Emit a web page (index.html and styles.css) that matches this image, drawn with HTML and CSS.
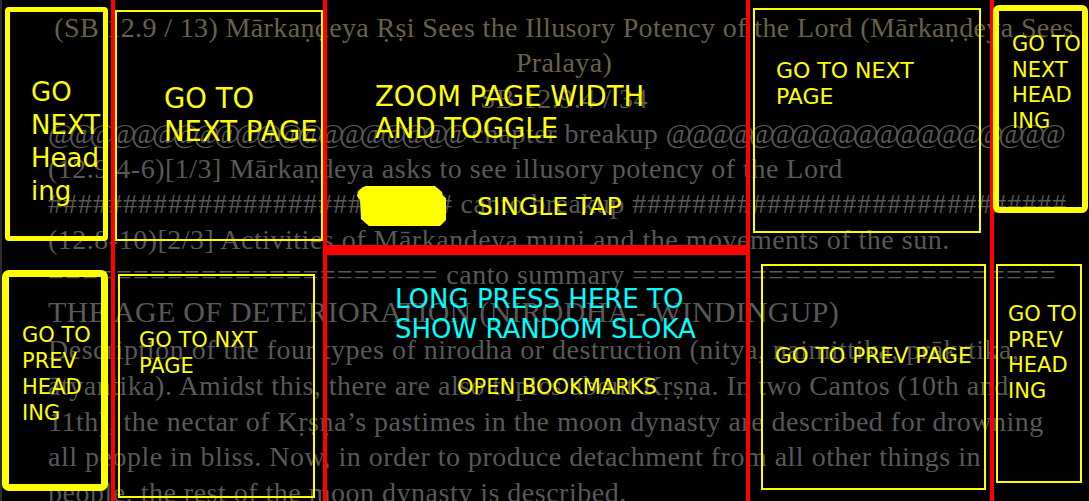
FILE: index.html
```html
<!DOCTYPE html>
<html lang="en">
<head>
<meta charset="utf-8">
<title>Reader tap zones</title>
<link rel="stylesheet" href="styles.css">
</head>
<body>
<main class="reader">
  <div class="title">(SB 12.9 / 13) Mārkaṇḍeya Ṛṣi Sees the Illusory Potency of the Lord (Mārkaṇḍeya Sees</div>
  <div class="title">Pralaya)</div>
  <div class="ref">SB 12.9.4 / 34</div>
  <div class="line"><span class="at">@@@@@@@@@@@@@@@@@@@@</span> chapter breakup <span class="at">@@@@@@@@@@@@@@@@@@@</span></div>
  <div class="line">(12.9.4-6)[1/3] Mārkaṇḍeya asks to see illusory potency of the Lord</div>
  <div class="line"><span class="hash">###########################</span>  canto breakup  <span class="hash">#############################</span></div>
  <div class="line">(12.8-10)[2/3] Activities of Mārkaṇḍeya muni and the movements of the sun.</div>
  <div class="line"><span class="eq">=======================</span>  canto summary  <span class="eq">=========================</span></div>
  <h2 class="chapter">THE AGE OF DETERIORATION (NIRODHA - WINDINGUP)</h2>
  <p class="summary">Description of the four types of nirodha or destruction (nitya, naimittika, prākṛtika,<br>ātyantika). Amidst this, there are also topics about Kṛṣṇa. In two Cantos (10th and<br>11th), the nectar of Kṛṣṇa’s pastimes in the moon dynasty are described for drowning<br>all people in bliss. Now, in order to produce detachment from all other things in<br>people, the rest of the moon dynasty is described.</p>
</main>

<div class="zones">
  <div class="col col-1">
    <div class="zone thick z-a">GO<br>NEXT<br>Head<br>ing</div>
    <div class="zone thick z-b">GO TO<br>PREV<br>HEAD<br>ING</div>
  </div>
  <div class="col col-2">
    <div class="zone thin z-c">GO TO<br>NEXT PAGE</div>
    <div class="zone thin z-d">GO TO NXT<br>PAGE</div>
  </div>
  <div class="col col-3">
    <div class="half half-top">
      <div class="zoom-label">ZOOM PAGE WIDTH<br>AND TOGGLE</div>
      <div class="tap-row">
        <svg class="blob" width="90" height="41" viewBox="0 0 90 41" aria-hidden="true">
          <polygon points="9,0 78,0 85,6 86,10 89,12 89,34 83,40 12,40 4,33 3,14 0,10 1,5 6,1" fill="#ffff00"/>
        </svg>
        <span class="tap-label">SINGLE TAP</span>
      </div>
    </div>
    <div class="half half-bottom">
      <div class="long-press">LONG PRESS HERE TO<br>SHOW RANDOM SLOKA</div>
      <div class="bookmarks">OPEN BOOKMARKS</div>
    </div>
  </div>
  <div class="col col-4">
    <div class="zone thin z-e">GO TO NEXT<br>PAGE</div>
    <div class="zone thin z-f">GO TO PREV PAGE</div>
  </div>
  <div class="col col-5">
    <div class="zone thick z-g">GO TO<br>NEXT<br>HEAD<br>ING</div>
    <div class="zone thin z-h">GO TO<br>PREV<br>HEAD<br>ING</div>
  </div>
</div>
</body>
</html>
```

FILE: styles.css
```css
html, body {
  margin: 0;
  padding: 0;
  background: #000;
}

body {
  width: 1089px;
  height: 501px;
  overflow: hidden;
  position: relative;
  font-family: "Liberation Serif", "DejaVu Serif", serif;
}

/* ---------- underlying page text ---------- */
.reader {
  padding: 10px 9px 0 48px;
  color: #585858;
  font-size: 28px;
  letter-spacing: 0.5px;
  line-height: 35.3px;
  white-space: nowrap;
}

.title {
  text-align: center;
  color: #68614a;
  letter-spacing: 0.37px;
}

.ref {
  text-align: center;
  color: #5a584c;
}

.at {
  letter-spacing: -5px;
}

.hash {
  letter-spacing: 1px;
}

.eq {
  letter-spacing: 1.2px;
}

.chapter {
  margin: 0;
  font-size: 30px;
  letter-spacing: 0.25px;
  font-weight: normal;
  line-height: 40px;
}

.summary {
  margin: 0;
  line-height: 35.6px;
}

/* ---------- tap-zone overlay ---------- */
.zones {
  position: absolute;
  inset: 0;
  display: grid;
  grid-template-columns: 111px 212px 423px 244px 99px;
  font-family: "DejaVu Sans", "Liberation Sans", sans-serif;
  color: #ffff00;
}

.col {
  display: flex;
  flex-direction: column;
  align-items: flex-start;
  box-sizing: border-box;
  min-width: 0;
}

.col + .col {
  border-left: 4px solid #ff0000;
}

.col-1 {
  border-left: 2px solid #2c2c2c;
}

.zone {
  box-sizing: border-box;
  white-space: nowrap;
  flex: none;
}

.thin {
  border: 2px solid #ffff00;
}

.thick {
  border-style: solid;
  border-color: #ffff00;
}

.z-a {
  margin: 7px 0 0 3px;
  width: 103px;
  height: 234px;
  border-width: 5px;
  border-radius: 4px;
  padding: 63.5px 0 0 21px;
  font-size: 26px;
  line-height: 33px;
}

.z-b {
  margin: 29px 0 0 0;
  width: 106px;
  height: 221px;
  border-width: 7px;
  border-radius: 7px;
  padding: 44.7px 0 0 13px;
  font-size: 21px;
  line-height: 26px;
}

.z-c {
  margin: 10px 0 0 0;
  width: 208px;
  height: 231px;
  padding: 70px 0 0 47px;
  font-size: 27.5px;
  line-height: 33px;
}

.z-d {
  margin: 33px 0 0 3px;
  width: 197px;
  height: 224px;
  padding: 50.7px 0 0 19px;
  font-size: 21px;
  line-height: 26px;
}

.half {
  box-sizing: border-box;
  width: 100%;
  white-space: nowrap;
}

.half-top {
  height: 250px;
  border-bottom: 5px solid #ff0000;
  padding-top: 79.7px;
}

.half-bottom {
  flex: 1;
  border-top: 5px solid #ff0000;
  padding-top: 29px;
}

.zoom-label {
  margin-left: 48px;
  font-size: 27.5px;
  line-height: 32px;
}

.tap-row {
  display: flex;
  align-items: flex-start;
  margin-top: 42.3px;
}

.blob {
  display: block;
  margin-left: 30px;
  flex: none;
}

.tap-label {
  margin: 5.8px 0 0 30px;
  font-size: 25px;
  line-height: 29px;
}

.long-press {
  margin-left: 68px;
  color: #00ffff;
  font-size: 26px;
  line-height: 30px;
}

.bookmarks {
  margin: 30.7px 0 0 130px;
  font-size: 21px;
  line-height: 24px;
}

.z-e {
  margin: 8px 0 0 3px;
  width: 228px;
  height: 225px;
  padding: 48.4px 0 0 21px;
  font-size: 22px;
  line-height: 26px;
}

.z-f {
  margin: 31px 0 0 11px;
  width: 225px;
  height: 226px;
  padding: 77px 0 0 12px;
  font-size: 21.5px;
  line-height: 26px;
}

.z-g {
  margin: 5px 0 0 -1px;
  width: 95px;
  height: 208px;
  border-width: 6px;
  border-radius: 6px;
  padding: 20.9px 0 0 13px;
  font-size: 21px;
  line-height: 25.7px;
}

.z-h {
  margin: 51px 0 0 2px;
  width: 86px;
  height: 219px;
  padding: 35.9px 0 0 10px;
  font-size: 21px;
  line-height: 25.7px;
}
```
